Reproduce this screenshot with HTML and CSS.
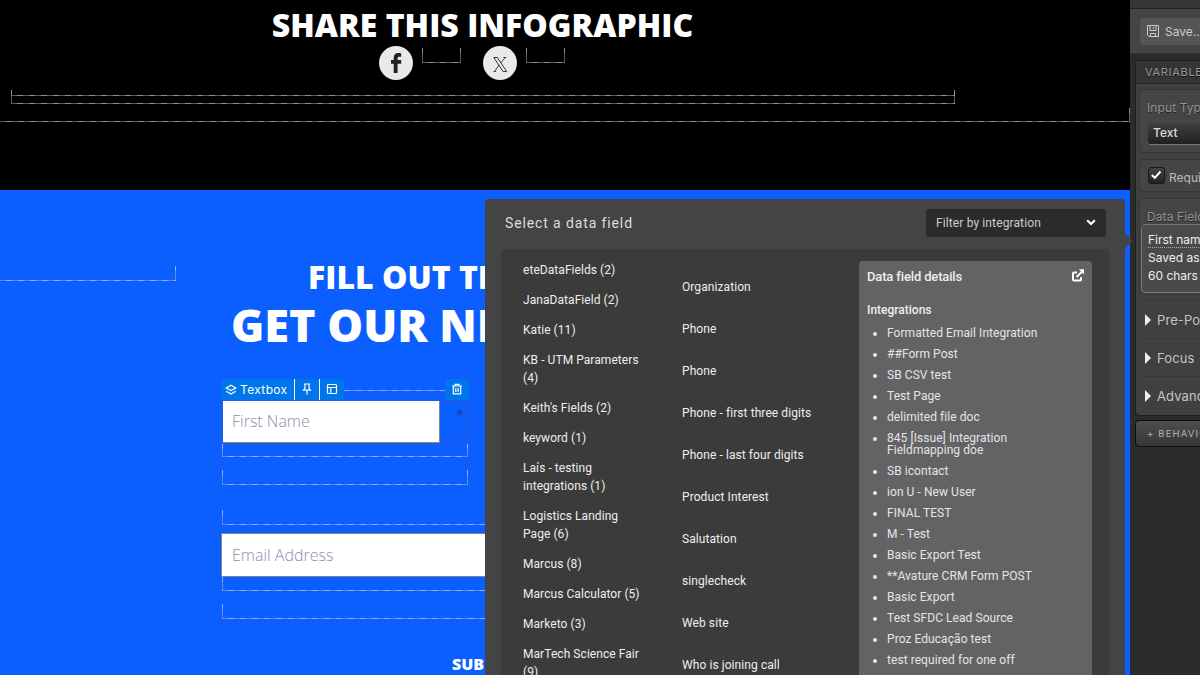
FILE: index.html
```html
<!DOCTYPE html>
<html lang="en">

<head>
	<meta charset="UTF-8">
	<title>Page editor</title>
	<link rel="stylesheet" href="styles.css">
</head>

<body>
	<div id="app">
		<main id="canvas">
			<section class="share">
				<h2>SHARE THIS INFOGRAPHIC</h2>
				<div class="social">
					<a class="round"><svg width="34" height="34" viewBox="0 0 34 34"><path d="M14.7 27V17.8H12V14H14.7V12.2C14.7 8.6 16.3 7 19.3 7C20.6 7 21.6 7.2 22.2 7.4V10.8H20.6C19.2 10.8 18.6 11.4 18.6 12.6V14H22.2V17.8H18.6V27Z" fill="#222"/></svg></a>
					<div class="guide"></div>
					<a class="round"><svg width="34" height="34" viewBox="0 0 34 34" fill="none" stroke="#333"><path d="M10.8 11.5H14.4L23.7 25.5H20.1Z"/><path d="M20.3 11.5H23.3M22.3 11.5L17.7 17M16.2 18.8L11.5 25.5M10.5 25.5H13.2" stroke-width=".9"/></svg></a>
					<div class="guide"></div>
				</div>
				<div class="guide inner"></div>
				<div class="guide outer"></div>
			</section>
			<section class="signup">
				<div class="guide side"></div>
				<h3>FILL OUT THE FORM TO</h3>
				<h1>GET OUR NEWSLETTER</h1>
				<div class="toolbar">
					<span class="tab name">
						<svg width="12" height="12" viewBox="0 0 12 12"><path d="M6 1.2L10.8 3.9L6 6.6L1.2 3.9Z M1.2 7.2L6 10L10.8 7.2"/></svg>
						Textbox
					</span>
					<span class="tab"><svg width="12" height="12" viewBox="0 0 12 12"><path d="M3 1H9M4 1V5L2.5 7.2H9.5L8 5V1M6 7.2V11.5"/></svg></span>
					<span class="tab last"><svg width="12" height="12" viewBox="0 0 12 12"><rect x="1.5" y="1.5" width="9" height="9" rx="1"/><path d="M1.5 4.5H10.5M4.8 4.5V10.5"/></svg></span>
					<span class="line"></span>
					<span class="tab trash"><svg width="12" height="12" viewBox="0 0 12 12"><path d="M1 3H11M4 3V1.3H8V3M2.3 3V10.8H9.7V3M4.8 5V9M7.2 5V9"/></svg></span>
				</div>
				<div class="field selected">
					<div class="input">First Name</div>
					<span class="star">*</span>
				</div>
				<div class="guide g1"></div>
				<div class="guide g2"></div>
				<div class="guide g3"></div>
				<div class="input email">Email Address</div>
				<div class="guide g4"></div>
				<div class="guide g5"></div>
				<div class="submit">SUBMIT</div>
			</section>
		</main>

		<aside id="sidebar">
			<div class="strip"></div>
			<div class="actions">
				<button type="button" class="save">
					<svg width="12" height="12" viewBox="0 0 12 12"><path d="M.5 .5H11.5V11.5H2L.5 10ZM3 .5V5.5H9V.5M3.5 11.5V8.5H8.5V11.5M6.5 2V4"/></svg>
					Save...
				</button>
			</div>
			<div class="panel">
				<div class="panel-head">VARIABLES</div>
				<div class="panel-body">
					<div class="card type">
						<label>Input Type</label>
						<div class="select">Text</div>
					</div>
					<div class="card required">
						<span class="check"><svg width="12" height="12" viewBox="0 0 12 12"><path d="M1.8 6L4.8 8.8L10.5 2.5"/></svg></span>
						Required
					</div>
					<div class="card data">
						<label>Data Field</label>
						<div class="value">
							<span>First name</span><br>
							Saved as text<br>
							60 chars max
						</div>
					</div>
					<div class="fold">Pre-Populate</div>
					<div class="fold">Focus</div>
					<div class="fold">Advanced</div>
				</div>
			</div>
			<div class="behavior"><b>+</b> BEHAVIORS</div>
		</aside>

		<div id="picker">
			<header>
				<span class="title">Select a data field</span>
				<div class="filter">Filter by integration
					<svg width="10" height="8" viewBox="0 0 10 8"><path d="M1.2 1.2L5 5L8.8 1.2"/></svg>
				</div>
			</header>
			<div class="columns">
				<ul class="groups">
					<li>eteDataFields (2)</li>
					<li>JanaDataField (2)</li>
					<li>Katie (11)</li>
					<li>KB - UTM Parameters (4)</li>
					<li>Keith's Fields (2)</li>
					<li>keyword (1)</li>
					<li>Laís - testing integrations (1)</li>
					<li>Logistics Landing Page (6)</li>
					<li>Marcus (8)</li>
					<li>Marcus Calculator (5)</li>
					<li>Marketo (3)</li>
					<li>MarTech Science Fair (9)</li>
				</ul>
				<ul class="fields">
					<li>Organization</li>
					<li>Phone</li>
					<li>Phone</li>
					<li>Phone - first three digits</li>
					<li>Phone - last four digits</li>
					<li>Product Interest</li>
					<li>Salutation</li>
					<li>singlecheck</li>
					<li>Web site</li>
					<li>Who is joining call</li>
				</ul>
				<div class="details">
					<div class="details-head">
						Data field details
						<svg width="12" height="13" viewBox="0 0 12 13"><path d="M5 3.5H2Q1 3.5 1 4.5V10.5Q1 11.5 2 11.5H8Q9 11.5 9 10.5V8.2M4.6 8L10 2.6"/><path class="tip" d="M6.8 .3H12V5.5Z"/></svg>
					</div>
					<h4>Integrations</h4>
					<ul>
						<li>Formatted Email Integration</li>
						<li>##Form Post</li>
						<li>SB CSV test</li>
						<li>Test Page</li>
						<li>delimited file doc</li>
						<li>845 [Issue] Integration Fieldmapping doe</li>
						<li>SB icontact</li>
						<li>ion U - New User</li>
						<li>FINAL TEST</li>
						<li>M - Test</li>
						<li>Basic Export Test</li>
						<li>**Avature CRM Form POST</li>
						<li>Basic Export</li>
						<li>Test SFDC Lead Source</li>
						<li>Proz Educação test</li>
						<li>test required for one off</li>
					</ul>
				</div>
			</div>
		</div>
	</div>
</body>

</html>
```
FILE: styles.css
```css
* {
	margin: 0;
	padding: 0;
	box-sizing: border-box;
}
body {
	overflow: hidden;
	font-family: Roboto, sans-serif;
}
ul {
	list-style: none;
}
svg {
	display: block;
	flex: none;
}
#app {
	position: relative;
	display: flex;
	width: 1200px;
	height: 675px;
	overflow: hidden;
}

/* page being edited */
#canvas {
	width: 1130px;
	height: 675px;
	overflow: hidden;
	font-family: "Open Sans", sans-serif;
	color: #fff;
}
.guide {
	--dark: rgba(150, 150, 150, 0.6);
	--light: rgba(190, 190, 190, 0.75);
	height: 15px;
	background:
		repeating-linear-gradient(90deg, var(--dark) 0 6px, var(--light) 6px 12px) 0 100% / 100% 1px no-repeat,
		linear-gradient(var(--light) 5px, var(--dark) 5px) 0 0 / 1px 100% no-repeat,
		linear-gradient(var(--light) 5px, var(--dark) 5px) 100% 0 / 1px 100% no-repeat;
}
.share {
	height: 190px;
	background: #000;
}
.share h2 {
	width: 965px;
	height: 46px;
	line-height: 50px;
	font-size: 32px;
	font-weight: 800;
	text-align: center;
	letter-spacing: 0.03px;
}
.social {
	display: flex;
	height: 44px;
	padding-left: 379px;
}
.round {
	width: 34px;
	height: 34px;
	border-radius: 50%;
	background: #e9e9e9;
}
.social .guide {
	width: 39px;
	margin: 2px 22px 0 9px;
}
.guide.inner {
	width: 944px;
	height: 14px;
	margin-left: 11px;
}
.guide.inner:before {
	content: '';
	display: block;
	height: 6px;
	background: repeating-linear-gradient(90deg, var(--dark) 0 6px, var(--light) 6px 12px) 0 100% / 100% 1px no-repeat;
}
.guide.outer {
	height: 14px;
	margin-top: 4px;
	background-position: 0 100%, -1px 0, 100% 0;
}
.signup {
	height: 485px;
	padding-left: 222px;
	background: #0c5fff;
	white-space: nowrap;
}
.signup .guide {
	--dark: rgba(150, 160, 190, 0.65);
	--light: rgba(180, 205, 255, 0.75);
	width: 600px;
}
.signup .side {
	width: 176px;
	margin-left: -222px;
	transform: translateY(76px);
	background-position: 0 100%, -1px 0, 100% 0;
}
.signup h3 {
	height: 42px;
	margin: 50px 0 0 86px;
	line-height: 43px;
	font-size: 32px;
	font-weight: 800;
}
.signup h1 {
	height: 82px;
	margin-left: 9px;
	line-height: 56px;
	font-size: 45px;
	font-weight: 800;
}
.toolbar {
	display: flex;
	width: 248px;
	height: 21px;
	margin-left: -1px;
	font: 400 12px/21px Inter, sans-serif;
}
.tab {
	display: flex;
	align-items: center;
	gap: 3px;
	padding: 0 6px 1px;
	background: #0075eb;
}
.tab + .tab {
	border-left: 1px solid #fff;
}
.tab svg {
	fill: none;
	stroke: #fff;
	stroke-width: 1.2;
}
.name {
	width: 73px;
	padding: 0 0 0 4px;
	border-radius: 4px 0 0 0;
	letter-spacing: 0.35px;
}
.last {
	border-radius: 0 4px 0 0;
}
.line {
	flex: 1;
	height: 1px;
	margin-top: 11px;
	background: repeating-linear-gradient(90deg, #86a9f2 0 6px, #5f8de8 6px 12px);
}
.trash {
	border-radius: 4px 4px 0 0;
}
.field {
	display: flex;
	justify-content: space-between;
	width: 247px;
	height: 44px;
	border: 1px solid #2a5bd0;
}
.input {
	width: 217px;
	height: 42px;
	padding-left: 9px;
	border: solid #808590;
	border-width: 0 1px 1px 0;
	background: #fff;
	color: #8791ad;
	font-size: 16px;
	font-weight: 300;
	line-height: 40px;
}
.star {
	padding: 3px 4px 0 0;
	color: #123d9c;
	font-size: 15px;
}
.g1,
.g2 {
	width: 246px !important;
}
.g1 {
	height: 13px !important;
}
.g2 {
	margin-top: 13px;
}
.g3 {
	margin-top: 25px;
}
.email {
	width: 600px;
	height: 44px;
	margin: 8px 0 0 -1px;
	padding-left: 10px;
	border-width: 1px;
	line-height: 42px;
}
.g4 {
	height: 14px !important;
}
.g5 {
	margin-top: 13px;
}
.submit {
	margin: 34px 0 0 230px;
	font-size: 16px;
	font-weight: 800;
	line-height: 22px;
}

/* right hand properties */
#sidebar {
	width: 70px;
	height: 675px;
	overflow: hidden;
	background: #2b2b2b;
	color: #c4c4c4;
	font: 13px/18px Inter, sans-serif;
	white-space: nowrap;
}
.strip {
	height: 9px;
	background: #363636;
	border-bottom: 1px solid #222;
}
.actions {
	height: 45px;
	padding: 9px 0 0 10px;
	background: #444;
	border-bottom: 1px solid #333;
}
.save {
	display: flex;
	align-items: center;
	gap: 6px;
	width: 90px;
	height: 27px;
	padding: 0 0 1px 7px;
	border: 0;
	border-radius: 4px;
	background: #555;
	color: #ccc;
	font: 12px Inter, sans-serif;
}
.save svg {
	fill: none;
	stroke: #ccc;
}
.panel {
	width: 200px;
	height: 356px;
	margin: 6px 0 0 5px;
	border: 1px solid #1e1e1e;
	border-radius: 4px;
	background: #404040;
}
.panel-head {
	height: 23px;
	padding-left: 9px;
	border-bottom: 1px solid #222;
	background: #353535;
	color: #999;
	font-size: 11px;
	line-height: 22px;
	letter-spacing: 0.7px;
	text-shadow: 0 1px #111;
}
.panel-body {
	padding: 5px 0 0 3px;
}
.card {
	border: 1px solid #363636;
	border-radius: 4px;
	background: #454545;
	padding-left: 7px;
}
.card label {
	display: block;
	color: #949494;
	font-size: 12px;
	letter-spacing: 0.1px;
	text-shadow: 0 1px #222;
}
.type {
	height: 64px;
	padding-top: 9px;
}
.select {
	height: 22px;
	margin-top: 6px;
	margin-left: 1px;
	padding-left: 5px;
	border-bottom: 1px solid #777;
	border-radius: 3px;
	background: linear-gradient(#3f3f3f, #202020);
	color: #ddd;
	font-size: 12px;
	font-weight: 500;
	line-height: 20px;
}
.required {
	display: flex;
	gap: 4px;
	height: 33px;
	margin-top: 6px;
	padding: 7px 0 0 8px;
	color: #bbb;
	font-size: 12px;
	line-height: 22px;
}
.check {
	width: 17px;
	height: 17px;
	padding: 1px;
	border: 1px solid #161616;
	border-radius: 3px;
	background: linear-gradient(#444, #222);
}
.check svg {
	fill: none;
	stroke: #fff;
	stroke-width: 2;
}
.data {
	height: 97px;
	margin-top: 6px;
	padding: 9px 0 0 1px;
}
.data label {
	height: 16px;
	padding-left: 6px;
}
.value {
	height: 69px;
	padding: 6px 0 0 6px;
	border: 1px solid #777;
	border-radius: 5px;
	background: #4a4a4a;
	color: #eee;
	font-size: 12px;
}
.value span {
	border-bottom: 1px dotted #aaa;
}
.fold {
	display: flex;
	align-items: center;
	gap: 6px;
	height: 38px;
	padding: 1px 0 0 6px;
	border-top: 1px solid #383838;
	letter-spacing: 0.1px;
}
.panel-body .data + .fold {
	margin-top: 5px;
}
.fold:before {
	content: '';
	border: solid transparent;
	border-width: 6px 0 6px 6px;
	border-left-color: #eee;
}
.behavior {
	width: 200px;
	height: 27px;
	margin: 4px 0 0 5px;
	padding-left: 11px;
	border: 1px solid #0c0c0c;
	border-radius: 4px;
	background: linear-gradient(#4e4e4e, #373737);
	color: #b4b4b4;
	font-size: 9.5px;
	line-height: 25px;
	letter-spacing: 1.15px;
}
.behavior b {
	font-weight: 400;
}

/* data field popup */
#picker {
	position: absolute;
	top: 199px;
	left: 485px;
	width: 640px;
	height: 500px;
	border-radius: 4px;
	background: #444;
	color: #eee;
	font-size: 12px;
	line-height: 18px;
}
#picker:after {
	content: '';
	position: absolute;
	top: 34px;
	left: 640px;
	border: solid transparent;
	border-width: 8px 0 8px 7px;
	border-left-color: #444;
}
#picker header {
	display: flex;
	justify-content: space-between;
	align-items: center;
	height: 50px;
	padding: 0 19px 2px 20px;
}
.title {
	color: #ddd;
	font-size: 14px;
	letter-spacing: 0.88px;
}
.filter {
	display: flex;
	justify-content: space-between;
	align-items: center;
	width: 180px;
	height: 28px;
	padding: 0 10px;
	border-radius: 3px;
	background: #2b2b2b;
	color: #ccc;
	letter-spacing: 0.12px;
}
.filter svg {
	fill: none;
	stroke: #fff;
	stroke-width: 2.2;
}
.columns {
	display: flex;
	width: 608px;
	height: 440px;
	margin-left: 16px;
	padding: 12px 17px 0 22px;
	border-radius: 4px;
	background: #3b3b3b;
	letter-spacing: 0.06px;
}
.groups {
	width: 123px;
}
.groups li {
	margin-bottom: 12px;
}
.fields {
	width: 177px;
	margin-left: 36px;
	padding-top: 17px;
	letter-spacing: 0.08px;
}
.fields li {
	margin-bottom: 24px;
}
.details {
	width: 233px;
	height: 420px;
	padding: 8px;
	border-radius: 4px;
	background: #636363;
}
.details-head {
	display: flex;
	justify-content: space-between;
	height: 32px;
	line-height: 16px;
	font-size: 13px;
	font-weight: 500;
	letter-spacing: -0.15px;
}
.details-head svg {
	fill: none;
	stroke: #fff;
	stroke-width: 2;
}
.details-head .tip {
	fill: #fff;
	stroke: none;
}
.details h4 {
	height: 26px;
	font-size: 12px;
	font-weight: 500;
	letter-spacing: 0;
}
.details ul {
	padding-left: 20px;
	list-style: disc;
	color: #e4e4ea;
	line-height: 12px;
}
.details li {
	width: 160px;
	margin-bottom: 9px;
}
```
